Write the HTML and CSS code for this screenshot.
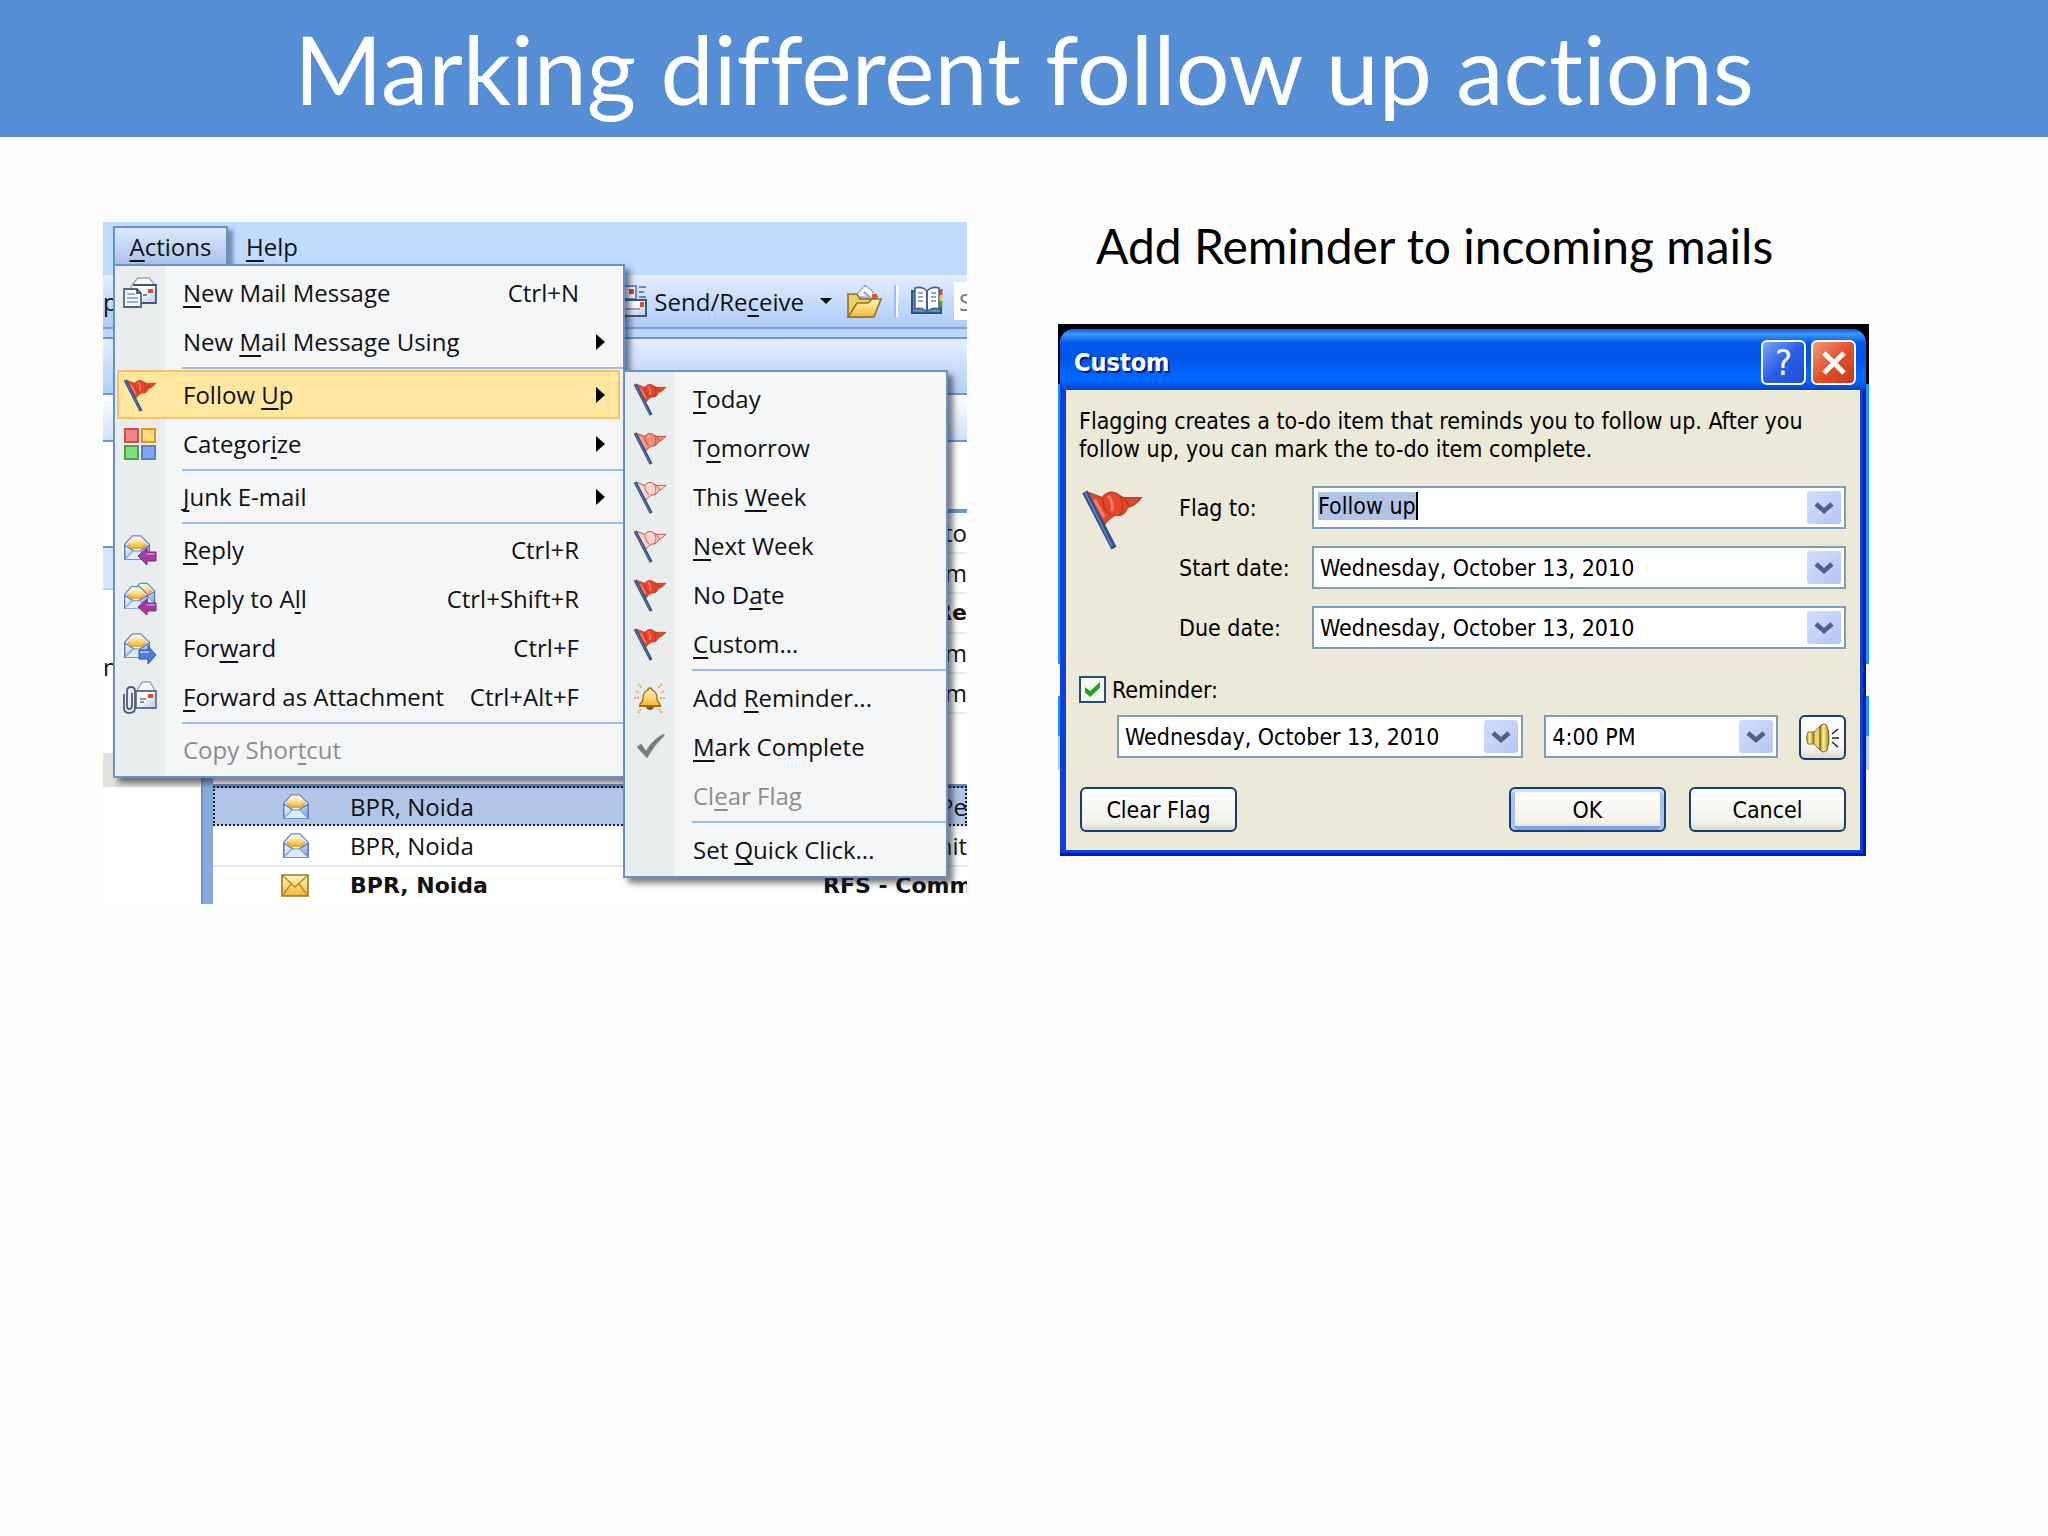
FILE: index.html
```html
<!DOCTYPE html>
<html lang="en">
<head>
  <meta charset="UTF-8">
  <meta name="viewport" content="width=device-width, initial-scale=1.0">
  <title>Marking different follow up actions</title>
  <link rel="stylesheet" href="styles.css">
</head>
<body>
  <!-- Shared icons -->
  <svg class="sprite" aria-hidden="true">
    <defs>
      <linearGradient id="gold" x1="0" y1="0" x2="0" y2="1"><stop offset="0" stop-color="#fff6c8"/><stop offset="1" stop-color="#f2b632"/></linearGradient>
      <linearGradient id="sky" x1="0" y1="0" x2="1" y2="1"><stop offset="0" stop-color="#fff"/><stop offset="1" stop-color="#6f9fe8"/></linearGradient>
      <linearGradient id="paper" x1="0" y1="0" x2="1" y2="1"><stop offset="0.4" stop-color="#fff"/><stop offset="1" stop-color="#b4c6e6"/></linearGradient>
      <linearGradient id="brass"><stop offset="0" stop-color="#a58a1c"/><stop offset="0.4" stop-color="#fff3a0"/><stop offset="1" stop-color="#a07a10"/></linearGradient>
    </defs>
    <symbol id="flag" viewBox="0 0 32 32">
      <path d="M3 2 L11 5 Q15 0 20 4 L22 5 L31 5 Q28 9 24 10 Q22 15 18 14 Q15 15 12 19Z" fill="currentColor" stroke="#b5482f" stroke-width="0.8"/>
      <path d="M11 5 q0 5 4 9M20 4 q3 5 0 10M22 5l3 4" fill="none" stroke="#a8321c" stroke-opacity=".55"/>
      <path d="M7 6l5 9M14 4q3 3 2 8" fill="none" stroke="#fff" stroke-opacity=".3" stroke-width="1.6"/>
      <path d="M2 2 L17 31" stroke="#2f4f8c" stroke-width="3"/>
      <path d="M2 2 L16 30" stroke="#6583b8" stroke-width="0.8"/>
    </symbol>
    <symbol id="open-mail" viewBox="0 0 32 32">
      <path d="M3 12 L11 3 h9 L29 12 V28 H3Z" fill="#f6f4f2" stroke="#7386bd" stroke-width="1.4"/>
      <path d="M6 12 L11 6 h10 L26 12 L20 16 h-8Z" fill="url(#gold)"/>
      <path d="M3 13 L16 21 L29 13 V28 H3Z" fill="url(#sky)" stroke="#5673bd" stroke-width="1.4"/>
      <path d="M3 28 L12 19 h8 L29 28" fill="#dcebff" stroke="#7d9ddd" stroke-width="1.2"/>
      <path d="M6 12 l5 4 h10 l5-4" fill="none" stroke="#eda82f" stroke-width="2"/>
    </symbol>
    <symbol id="reply" viewBox="0 0 34 34">
      <use href="#open-mail" x="-1" y="0" width="30" height="30"/>
      <path d="M15 23 L24 15 v4 h9 v9 h-9 v4Z" fill="#a53aa5" stroke="#762b7e"/>
      <path d="M24 21h8" stroke="#cc7ccc" stroke-width="2"/>
    </symbol>
    <symbol id="reply-all" viewBox="0 0 34 34">
      <use href="#open-mail" x="8" y="-1" width="26" height="26"/>
      <use href="#open-mail" x="-1" y="2" width="28" height="28"/>
      <path d="M15 25 L24 17 v4 h9 v8 h-9 v4Z" fill="#a53aa5" stroke="#762b7e"/>
      <path d="M24 23h8" stroke="#cc7ccc" stroke-width="2"/>
    </symbol>
    <symbol id="forward" viewBox="0 0 34 34">
      <use href="#open-mail" x="-1" y="0" width="30" height="30"/>
      <path d="M33 24 L25 15 v4 h-9 v9 h9 v5Z" fill="#4a7fe0" stroke="#2d55a8"/>
      <path d="M17 21h9" stroke="#9dc0f7" stroke-width="2"/>
    </symbol>
    <symbol id="new-mail" viewBox="0 0 34 34">
      <path d="M8 10 L15 2 h11 L33 10 V27 H8Z" fill="#f8f8fa" stroke="#9aa4ba" stroke-width="1.4"/>
      <path d="M10 9 h23 v18 H14" fill="url(#paper)" stroke="#40587f" stroke-width="1.8"/>
      <path d="M25 13h5v4h-5z" fill="#e04a26"/>
      <path d="M20 19h4" stroke="#45556f" stroke-width="1.4"/>
      <path d="M1 13 h13 l4 4 v14 H1Z" fill="#f7faff" stroke="#4d668f" stroke-width="1.8"/>
      <path d="M4 18h8M4 22h11M4 26h11" stroke="#7c9bd0" stroke-width="1.6"/>
      <path d="M14 13v4h4" fill="none" stroke="#2d405f" stroke-width="1.6"/>
    </symbol>
    <symbol id="attach-mail" viewBox="0 0 34 34">
      <path d="M13 12 L19 2 h8 L33 12" fill="#f8f8fa" stroke="#9aa4ba" stroke-width="1.4"/>
      <path d="M13 11 h20 v17 H13Z" fill="url(#paper)" stroke="#5d76a0" stroke-width="1.8"/>
      <path d="M25 14h5v4h-5z" fill="#e04a26"/>
      <path d="M17 19h6M17 22h4" stroke="#67758c" stroke-width="1.4"/>
      <path d="M1 14 V28 q0 5 5 5 q6 0 6-5 V11 q0-4-4-4 q-4 0-4 4 V26 q0 3 2 3 q3 0 3-3 V13" fill="none" stroke="#4a5f80" stroke-width="1.8"/>
    </symbol>
    <symbol id="categories" viewBox="0 0 34 34">
      <path d="M2 2h13v13H2z" fill="#f08585" stroke="#c94f55" stroke-width="2"/>
      <path d="M19 2h13v13H19z" fill="#ffd878" stroke="#d99a1c" stroke-width="2"/>
      <path d="M2 19h13v13H2z" fill="#86dc7c" stroke="#4ba34a" stroke-width="2"/>
      <path d="M19 19h13v13H19z" fill="#7ea9f2" stroke="#5b7fcb" stroke-width="2"/>
    </symbol>
    <symbol id="bell" viewBox="0 0 34 34">
      <path d="M5 3l4 4M29 3l-4 4M1 17h6M27 17h6M5 32l3-4M29 32l-3-4M3 10l3 2M31 10l-3 2" stroke="#f0b040" stroke-width="2" stroke-dasharray="2 1"/>
      <path d="M17 7 q2 0 2 2 q5 2 5 8 q0 4 3 6 v2 H7 v-2 q3-2 3-6 q0-6 5-8 q0-2 2-2Z" fill="url(#gold)" stroke="#9a7014" stroke-width="1.3"/>
      <path d="M13 26h8q-1 3-4 3t-4-3z" fill="#735c35"/>
      <path d="M6 25h22" stroke="#a66d10" stroke-width="2"/>
    </symbol>
    <symbol id="check" viewBox="0 0 34 34">
      <path d="M4 17 l4-3 l5 7 Q20 9 31 4 v2 Q21 15 14 28Z" fill="#777b7b" stroke="#8f9393" stroke-width=".8"/>
    </symbol>
    <symbol id="closed-mail" viewBox="0 0 28 28">
      <path d="M1 3h26v21H1z" fill="url(#gold)" stroke="#9c7a26" stroke-width="1.6"/>
      <path d="M2 4 L14 15 L26 4M2 23 L10 12M26 23 L18 12" fill="none" stroke="#bb8b26" stroke-width="1.4"/>
    </symbol>
    <symbol id="chevron" viewBox="0 0 20 14">
      <path d="M2 3 L10 10 L18 3" fill="none" stroke="#4d6185" stroke-width="4.6"/>
    </symbol>
  </svg>

  <header class="slide-title">
    <h1>Marking different follow up actions</h1>
  </header>

  <main>
    <section class="outlook">
      <nav class="menubar">
        <div class="menu-root">
          <button class="menu-tab open"><u>A</u>ctions</button>
          <ul class="menu">
            <li><button><svg class="icon"><use href="#new-mail"/></svg><span><u>N</u>ew Mail Message</span><kbd>Ctrl+N</kbd></button></li>
            <li><button><i class="icon"></i><span>New <u>M</u>ail Message Using</span><b class="arrow"></b></button></li>
            <li class="sep"></li>
            <li class="has-sub">
              <button class="active"><svg class="icon flag"><use href="#flag"/></svg><span>Follow <u>U</u>p</span><b class="arrow"></b></button>
              <ul class="menu submenu">
                <li><button><svg class="icon flag"><use href="#flag"/></svg><span><u>T</u>oday</span></button></li>
                <li><button><svg class="icon flag medium"><use href="#flag"/></svg><span>T<u>o</u>morrow</span></button></li>
                <li><button><svg class="icon flag light"><use href="#flag"/></svg><span>This <u>W</u>eek</span></button></li>
                <li><button><svg class="icon flag light"><use href="#flag"/></svg><span><u>N</u>ext Week</span></button></li>
                <li><button><svg class="icon flag"><use href="#flag"/></svg><span>No D<u>a</u>te</span></button></li>
                <li><button><svg class="icon flag"><use href="#flag"/></svg><span><u>C</u>ustom...</span></button></li>
                <li class="sep"></li>
                <li><button><svg class="icon"><use href="#bell"/></svg><span>Add <u>R</u>eminder...</span></button></li>
                <li><button><svg class="icon"><use href="#check"/></svg><span><u>M</u>ark Complete</span></button></li>
                <li><button disabled><i class="icon"></i><span>Cl<u>e</u>ar Flag</span></button></li>
                <li class="sep"></li>
                <li><button><i class="icon"></i><span>Set <u>Q</u>uick Click...</span></button></li>
              </ul>
            </li>
            <li><button><svg class="icon"><use href="#categories"/></svg><span>Categor<u>i</u>ze</span><b class="arrow"></b></button></li>
            <li class="sep"></li>
            <li><button><i class="icon"></i><span><u>J</u>unk E-mail</span><b class="arrow"></b></button></li>
            <li class="sep"></li>
            <li><button><svg class="icon"><use href="#reply"/></svg><span><u>R</u>eply</span><kbd>Ctrl+R</kbd></button></li>
            <li><button><svg class="icon"><use href="#reply-all"/></svg><span>Reply to A<u>l</u>l</span><kbd>Ctrl+Shift+R</kbd></button></li>
            <li><button><svg class="icon"><use href="#forward"/></svg><span>For<u>w</u>ard</span><kbd>Ctrl+F</kbd></button></li>
            <li><button><svg class="icon"><use href="#attach-mail"/></svg><span><u>F</u>orward as Attachment</span><kbd>Ctrl+Alt+F</kbd></button></li>
            <li class="sep"></li>
            <li><button disabled><i class="icon"></i><span>Copy Shor<u>t</u>cut</span></button></li>
          </ul>
        </div>
        <button class="menu-tab"><u>H</u>elp</button>
      </nav>

      <div class="toolbar">
        <span class="toolbar-start">p</span>
        <button class="tool send">
          <svg width="34" height="34" viewBox="0 0 34 34"><path d="M9 2h13v13H9z" fill="#fff" stroke="#6f8fc4" stroke-width="2"/><path d="M15 5h5v5h-5z" fill="#e04a26"/><path d="M25 3h7M25 8h5M25 13h7" stroke="#7086ab" stroke-width="2"/><path d="M8 16h24v16H8z" fill="url(#paper)" stroke="#40587f" stroke-width="2"/><path d="M26 18h4v5h-4z" fill="#e04a26"/><path d="M12 25h14" stroke="#8ea6cd" stroke-width="2"/></svg>
          <span>Send/Re<u>c</u>eive</span>
          <b class="caret"></b>
        </button>
        <button class="tool" aria-label="Open folder">
          <svg width="36" height="36" viewBox="0 0 36 36"><path d="M10 13 L19 2 L32 14 L25 22Z" fill="#fff" stroke="#7e8fae" stroke-width="1.4" stroke-dasharray="2 1"/><path d="M14 14l10 2M18 9l7 7" stroke="#aab3cc" stroke-width="3"/><path d="M26 11h5v5h-5z" fill="#d8553a"/><path d="M2 11h9l3 5h11v18H2z" fill="#f0cf6a" stroke="#8d7226" stroke-width="1.6"/><path d="M2 34 L11 20 h11 l4-4 h9 L28 34Z" fill="url(#gold)" stroke="#94731e" stroke-width="1.6"/></svg>
        </button>
        <i class="divider"></i>
        <button class="tool" aria-label="Address book">
          <svg width="34" height="30" viewBox="0 0 34 30"><path d="M2 5h29v22H2z" fill="#6889c8" stroke="#34507f" stroke-width="2"/><path d="M5 2 q7-2 12 3 q5-5 12-3 V23 q-7-2-12 3 q-5-5-12-3Z" fill="#fff" stroke="#45618f" stroke-width="1.6"/><path d="M17 5v21" stroke="#45618f" stroke-width="2"/><path d="M8 7h5M8 11h5M8 15h5M21 7h5M21 11h5M21 15h5" stroke="#89a7da" stroke-width="2"/><path d="M31 3v6" stroke="#d94a32" stroke-width="3"/><path d="M31 9v6" stroke="#efcb3e" stroke-width="3"/><path d="M31 15v6" stroke="#43a653" stroke-width="3"/></svg>
        </button>
        <input class="find" type="text" value="S" aria-label="Search address books">
      </div>

      <div class="band band-title"></div>
      <div class="band band-head"></div>

      <div class="panes">
        <div class="sidebar">
          <div class="side-head"></div>
          <div class="side-group"></div>
          <div class="side-item">n</div>
          <div class="side-foot"></div>
        </div>
        <div class="splitter"></div>
        <div class="mail">
          <table>
            <colgroup>
              <col class="col-status">
              <col class="col-from">
              <col>
              <col class="col-tail">
            </colgroup>
            <tbody>
              <tr><td colspan="3"></td><td class="tail">to</td></tr>
              <tr><td colspan="3"></td><td class="tail">em</td></tr>
              <tr class="unread"><td colspan="3"></td><td class="tail">Re</td></tr>
              <tr><td colspan="3"></td><td class="tail">em</td></tr>
              <tr><td colspan="3"></td><td class="tail">em</td></tr>
              <tr class="group"><td colspan="4"></td></tr>
              <tr class="selected"><td class="status"><svg width="30" height="30"><use href="#open-mail"/></svg></td><td>BPR, Noida</td><td></td><td class="tail">Pe</td></tr>
              <tr><td class="status"><svg width="30" height="30"><use href="#open-mail"/></svg></td><td>BPR, Noida</td><td></td><td class="tail">nit</td></tr>
              <tr class="unread last"><td class="status"><svg width="28" height="28"><use href="#closed-mail"/></svg></td><td>BPR, Noida</td><td colspan="2">RFS - Comm</td></tr>
            </tbody>
          </table>
        </div>
      </div>
    </section>

    <section class="reminder">
      <h2>Add Reminder to incoming mails</h2>
      <div class="backdrop">
        <form class="dialog">
          <div class="titlebar">
            <h3>Custom</h3>
            <button type="button" class="title-btn help" aria-label="Help">?</button>
            <button type="button" class="title-btn close" aria-label="Close"><svg width="28" height="28" viewBox="0 0 28 28"><path d="M4 4 L24 24M24 4 L4 24" stroke="#fff" stroke-width="5"/></svg></button>
          </div>
          <div class="dialog-body">
            <p>Flagging creates a to-do item that reminds you to follow up. After you follow up, you can mark the to-do item complete.</p>
            <div class="fields">
              <svg class="big-flag"><use href="#flag"/></svg>
              <label for="flag-to">Flag to:</label>
              <div class="combo"><input id="flag-to" type="text" value="Follow up"><span class="drop"><svg><use href="#chevron"/></svg></span></div>
              <label for="start">Start date:</label>
              <div class="combo"><select id="start"><option>Wednesday, October 13, 2010</option></select><span class="drop"><svg><use href="#chevron"/></svg></span></div>
              <label for="due">Due date:</label>
              <div class="combo"><select id="due"><option>Wednesday, October 13, 2010</option></select><span class="drop"><svg><use href="#chevron"/></svg></span></div>
            </div>
            <div class="check-row">
              <input id="reminder" type="checkbox" checked>
              <label for="reminder">Reminder:</label>
            </div>
            <div class="when">
              <div class="combo day"><select aria-label="Reminder date"><option>Wednesday, October 13, 2010</option></select><span class="drop"><svg><use href="#chevron"/></svg></span></div>
              <div class="combo time"><select aria-label="Reminder time"><option>4:00 PM</option></select><span class="drop"><svg><use href="#chevron"/></svg></span></div>
              <button type="button" class="btn sound" aria-label="Sound">
                <svg width="34" height="30" viewBox="0 0 34 30"><path d="M2 9h6v12H2q-3-6 0-12Z" fill="url(#brass)" stroke="#8c7628"/><path d="M8 9 L14 3 V27 L8 21Z" fill="#e8d774" stroke="#8c7628"/><path d="M14 3 q4-4 7 0 q4 12 0 24 q-3 4-7 0Z" fill="url(#brass)" stroke="#75601a"/><path d="M26 11l6-5M26 15h7M26 19l6 5" stroke="#222" stroke-width="1.6"/></svg>
              </button>
            </div>
            <div class="actions">
              <button type="button" class="btn clear">Clear Flag</button>
              <button type="button" class="btn default">OK</button>
              <button type="button" class="btn">Cancel</button>
            </div>
          </div>
        </form>
      </div>
    </section>
  </main>
</body>
</html>
```
FILE: styles.css
```css
* {
  box-sizing: border-box;
}
body {
  margin: 0;
  background: #fdfdfd;
  font-family: 'Open Sans', 'Noto Sans', sans-serif;
  font-size: 24px;
  color: #111;
}
button, input, select {
  font: inherit;
  color: inherit;
  margin: 0;
  padding: 0;
  border: none;
  background: none;
}
u {
  text-underline-offset: 4px;
  text-decoration-thickness: 2px;
  text-decoration-skip-ink: none;
}
.sprite {
  position: absolute;
  width: 0;
  height: 0;
}

.slide-title {
  background: #558ed5;
  height: 137px;
  display: flex;
  align-items: center;
  justify-content: center;
}
h1 {
  margin: 0;
  font-family: Lato, sans-serif;
  font-weight: 400;
  font-size: 95px;
  font-variant-ligatures: none;
  line-height: 137px;
  color: #fff;
}
main {
  display: grid;
  grid-template-columns: 864fr 811fr;
  gap: 91px;
  align-items: start;
  padding: 85px 179px 40px 103px;
}

/* Outlook window */
.outlook {
  background: #fff;
  overflow: hidden;
}
.menubar {
  display: flex;
  height: 53px;
  padding: 4px 0 0 10px;
  background: #bfdbff;
}
.menu-root {
  position: relative;
}
.menu-tab {
  height: 40px;
  padding: 0 16px;
  border: 2px solid transparent;
}
.menu-tab.open {
  width: 115px;
  padding: 0;
  border-color: #6593cf;
  background: linear-gradient(#dfeafc, #a9c3ec);
  box-shadow: 5px 4px 4px rgba(40, 60, 100, 0.5);
}
.menu {
  list-style: none;
  position: absolute;
  z-index: 2;
  top: 38px;
  left: 0;
  width: 512px;
  margin: 0;
  padding: 2px 0;
  border: 2px solid #6593cf;
  background: linear-gradient(90deg, #e9eded 50px, #f5f6f8 50px);
  box-shadow: 5px 5px 6px rgba(30, 30, 40, 0.6);
}
.submenu {
  top: 0;
  left: 508px;
  width: 325px;
}
.has-sub {
  position: relative;
}
.menu button {
  display: flex;
  align-items: center;
  width: 100%;
  height: 49px;
  padding-left: 8px;
  text-align: left;
}
.menu button span {
  flex: 1;
}
.menu button.active {
  width: 503px;
  margin-left: 2px;
  padding-left: 4px;
  border: 2px solid #fbc06e;
  background: #ffe7a0;
}
.menu button:disabled {
  color: #8d8d8d;
}
.icon {
  flex: none;
  width: 34px;
  height: 34px;
  margin-right: 26px;
}
.flag {
  color: #e8452a;
}
.flag.medium {
  color: #f08a78;
}
.flag.light {
  color: #fbd0ca;
}
kbd {
  font: inherit;
  margin-right: 44px;
}
.arrow {
  margin-right: 18px;
  border: 8px solid transparent;
  border-left: 9px solid #000;
  border-right: none;
}
.active .arrow {
  margin-right: 13px;
}
.sep {
  height: 4px;
  margin-left: 67px;
  padding-top: 1px;
}
.submenu .sep {
  height: 5px;
}
.sep::before {
  content: "";
  display: block;
  height: 2px;
  background: #9ac0f2;
}

.toolbar {
  display: flex;
  align-items: center;
  height: 54px;
  background: linear-gradient(#e3eeff, #aecbf8);
  border-bottom: 2px solid #7ea3db;
}
.toolbar-start {
  margin-right: auto;
}
.tool {
  display: flex;
  align-items: center;
}
.send {
  margin-right: 14px;
}
.send span {
  margin: 0 16px 0 6px;
}
.caret {
  border: 6px solid transparent;
  border-top-color: #000;
  border-bottom: none;
}
.divider {
  width: 4px;
  height: 32px;
  margin: 0 12px;
  background: #9dbfee;
  border-right: 2px solid #fff;
}
.find {
  width: 13px;
  height: 38px;
  margin-left: 10px;
  padding-left: 5px;
  background: #fff;
  color: #777;
}
.band {
  border-bottom: 2px solid #6b96d2;
}
.band-title {
  height: 66px;
  border-top: 8px solid #bcd6fb;
  background: linear-gradient(#6b96d2 2px, #e3efff 2px, #b3d0fa);
}
.band-head {
  height: 47px;
  background: linear-gradient(#fff, #d0e1fa);
}

.panes {
  display: flex;
}
.sidebar {
  width: 98px;
}
.side-head {
  height: 106px;
  border-bottom: 2px solid #6b96d2;
}
.side-group {
  height: 42px;
  background: #d6e6fd;
  border-bottom: 2px solid #b5d0f6;
}
.side-item {
  height: 163px;
  padding-top: 60px;
}
.side-foot {
  height: 34px;
  background: #e2e2dd;
}
.splitter {
  width: 12px;
  background: #86abdb;
  border-left: 2px solid #6d95ce;
}
.mail {
  flex: 1;
  min-width: 0;
  margin-top: 67px;
  border-top: 4px solid #6b96d2;
}
table {
  width: 100%;
  border-collapse: collapse;
  table-layout: fixed;
}
td {
  height: 40px;
  padding: 0;
  border-bottom: 2px solid #e2ebfb;
  line-height: 36px;
  white-space: nowrap;
}
.col-status {
  width: 137px;
}
.col-from {
  width: 473px;
}
.col-tail {
  width: 38px;
}
.tail {
  text-align: right;
}
.status {
  padding-left: 68px;
}
.status svg {
  display: block;
}
.unread td {
  font-family: 'DejaVu Sans', sans-serif;
  font-size: 22px;
  font-weight: 700;
}
.last td {
  height: 38px;
  border-bottom: none;
}
.group td {
  height: 73px;
  border-bottom: 4px solid #5f8ac4;
}
.selected td {
  background: #b1c6e8;
}
.selected {
  outline: 2px dotted #222;
  outline-offset: -2px;
}

/* Reminder dialog */
h2 {
  margin: 0 0 54px 38px;
  font-family: Lato, sans-serif;
  font-weight: 400;
  font-size: 48px;
  font-variant-ligatures: none;
  line-height: 48px;
  color: #000;
}
.backdrop {
  padding: 5px 3px 0 2px;
  background: linear-gradient(#000 60px, #149af5 60px, #149af5 340px, #fdfdfd 340px, #fdfdfd 372px, #149af5 372px, #149af5 412px, #a8d0fa 412px, #a8d0fa 446px, #fdfdfd 446px);
}
.dialog {
  border-radius: 14px 14px 0 0;
  background: #0a3fe0;
  padding: 0 6px 6px;
  box-shadow: inset -3px -3px 0 #0018a8;
  font-family: 'DejaVu Sans Condensed', 'Noto Sans', sans-serif;
  font-size: 23px;
  color: #000;
}
.titlebar {
  display: flex;
  align-items: center;
  height: 61px;
  margin: 0 -6px;
  padding: 6px 10px 0 14px;
  gap: 5px;
  border-radius: 14px 14px 0 0;
  background: linear-gradient(#0a5be0, #3f97ff 5px, #0058ee 14px, #0053e4 28px, #0066ff 44px, #0066ff 52px, #0040c8);
}
h3 {
  flex: 1;
  margin: 0;
  font-size: 25px;
  color: #fff;
  text-shadow: 2px 2px 0 #0a1c80;
}
.title-btn {
  display: flex;
  align-items: center;
  justify-content: center;
  width: 45px;
  height: 45px;
  border: 2px solid #fff;
  border-radius: 6px;
  color: #fff;
}
.help {
  background: linear-gradient(135deg, #7fa4f8, #2a5ee6 50%, #1c4fd8);
  font-size: 36px;
}
.close {
  background: linear-gradient(135deg, #f09a80, #e2502c 50%, #c83a12);
}
.dialog-body {
  padding: 16px 13px 17px 12px;
  background: #ece9d8;
  border: 1px solid #f4f6fa;
}
.dialog-body p {
  margin: 0 30px 23px 0;
  line-height: 28px;
}
.fields {
  display: grid;
  grid-template-columns: 100px 133px 1fr;
  row-gap: 17px;
  align-items: center;
}
.big-flag {
  grid-row: 1 / 3;
  align-self: start;
  width: 62px;
  height: 62px;
  margin: 2px 0 0 2px;
  color: #e8452a;
}
.fields label {
  grid-column: 2;
}
.combo {
  position: relative;
  height: 43px;
  padding: 4px;
  border: 2px solid #7f9db9;
  background: #fff;
}
.combo select {
  appearance: none;
  width: 100%;
  height: 100%;
  padding-left: 2px;
}
.combo input {
  field-sizing: content;
  height: 28px;
  line-height: 28px;
  background: #b1c4e6;
  border-right: 2px solid #000;
  display: block;
}
.drop {
  position: absolute;
  top: 3px;
  right: 3px;
  width: 34px;
  height: 33px;
  display: flex;
  align-items: center;
  justify-content: center;
  border-radius: 3px;
  background: linear-gradient(135deg, #d4defd, #b4c6f6);
  pointer-events: none;
}
.drop svg {
  width: 20px;
  height: 14px;
}
.check-row {
  display: flex;
  align-items: center;
  gap: 6px;
  margin: 27px 0 12px;
}
.check-row input {
  appearance: none;
  width: 27px;
  height: 27px;
  border: 2px solid #1c5180;
  background: #f6f6f2;
}
.check-row input:checked::before {
  content: "";
  display: block;
  width: 15px;
  height: 15px;
  margin: 4px;
  background: #21a121;
  clip-path: polygon(0 35%, 35% 60%, 100% 0, 100% 38%, 35% 100%, 0 70%);
}
.when {
  display: flex;
  gap: 21px;
  margin-left: 38px;
}
.day {
  flex: 409;
}
.time {
  flex: 230;
}
.btn {
  width: 157px;
  height: 45px;
  border: 2px solid #123f70;
  border-radius: 6px;
  background: linear-gradient(#fff, #f3f2ec 80%, #dcd8cc);
}
.sound {
  display: flex;
  align-items: center;
  justify-content: center;
  width: 47px;
}
.actions {
  display: flex;
  gap: 23px;
  margin: 27px 0 0 1px;
}
.clear {
  margin-right: auto;
}
.default {
  box-shadow: inset 0 3px 0 #cfe0fc, inset 4px 0 0 #a9c4f4, inset -4px 0 0 #a9c4f4, inset 0 -4px 0 #7f9fe8;
}
```
